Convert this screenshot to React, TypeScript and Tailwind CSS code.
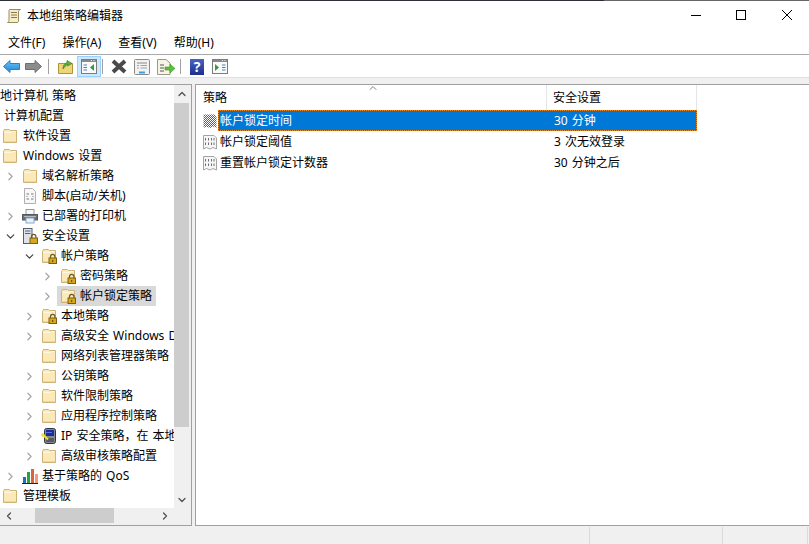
import { ChevronDown, ChevronLeft, ChevronRight, ChevronUp } from "lucide-react"

type IconName = "folder" | "lock" | "script" | "printer" | "server" | "ip" | "qos"

interface TreeRow {
  label: string
  level: number
  arrow?: "closed" | "open"
  icon: IconName
  selected?: boolean
}

const treeRows: TreeRow[] = [
  { label: "软件设置", level: 0, icon: "folder" },
  { label: "Windows 设置", level: 0, icon: "folder" },
  { label: "域名解析策略", level: 1, arrow: "closed", icon: "folder" },
  { label: "脚本(启动/关机)", level: 1, icon: "script" },
  { label: "已部署的打印机", level: 1, arrow: "closed", icon: "printer" },
  { label: "安全设置", level: 1, arrow: "open", icon: "server" },
  { label: "帐户策略", level: 2, arrow: "open", icon: "lock" },
  { label: "密码策略", level: 3, arrow: "closed", icon: "lock" },
  { label: "帐户锁定策略", level: 3, arrow: "closed", icon: "lock", selected: true },
  { label: "本地策略", level: 2, arrow: "closed", icon: "lock" },
  { label: "高级安全 Windows Defender 防火墙", level: 2, arrow: "closed", icon: "folder" },
  { label: "网络列表管理器策略", level: 2, icon: "folder" },
  { label: "公钥策略", level: 2, arrow: "closed", icon: "folder" },
  { label: "软件限制策略", level: 2, arrow: "closed", icon: "folder" },
  { label: "应用程序控制策略", level: 2, arrow: "closed", icon: "folder" },
  { label: "IP 安全策略，在 本地计算机", level: 2, arrow: "closed", icon: "ip" },
  { label: "高级审核策略配置", level: 2, arrow: "closed", icon: "folder" },
  { label: "基于策略的 QoS", level: 1, arrow: "closed", icon: "qos" },
  { label: "管理模板", level: 0, icon: "folder" },
]

const policies = [
  { name: "帐户锁定时间", value: "30 分钟", selected: true },
  { name: "帐户锁定阈值", value: "3 次无效登录" },
  { name: "重置帐户锁定计数器", value: "30 分钟之后" },
]

function Folder({ lock }: { lock?: boolean }) {
  return (
    <svg width="16" height="16" viewBox="0 0 16 16" className="shrink-0">
      <path d="M1.5 3.5V14.5H14.5V2.5H8.5L7.5 1.5H2.5Z" fill="#fbe9b8" stroke="#cdb27a" />
      <path d="M2.5 4.5H9.5L10.5 3.5H13.5" fill="none" stroke="#fff8e2" />
      <path d="M2 13.5H14" stroke="#f0d898" />
      {lock && (
        <g>
          <path d="M9.5 10V8.5a2.2 2.2 0 0 1 4.4 0V10" fill="none" stroke="#6a5a30" strokeWidth="1.2" />
          <rect x="8" y="10" width="7.5" height="5.5" fill="#d8a81c" stroke="#7d6010" />
          <path d="M11.7 12V14" stroke="#5a4408" />
        </g>
      )}
    </svg>
  )
}

function TreeIcon({ name }: { name: IconName }) {
  if (name === "folder") return <Folder />
  if (name === "lock") return <Folder lock />
  if (name === "script")
    return (
      <svg width="16" height="16" viewBox="0 0 16 16" className="shrink-0">
        <path d="M2.5 .5H10.5L13.5 3.5V15.5H2.5Z" fill="#f7f7f7" stroke="#b0b0b0" />
        <path d="M4.5 6H7M9 6H11.5M4.5 8.5H5.5M10.5 8.5H11.5M4.5 11H7M9 11H11.5" stroke="#7a7a7a" />
      </svg>
    )
  if (name === "printer")
    return (
      <svg width="16" height="16" viewBox="0 0 16 16" className="shrink-0">
        <rect x="4" y="1.5" width="8" height="6" fill="#f6f6f6" stroke="#9a9a9a" />
        <rect x=".5" y="6.5" width="15" height="5.5" fill="#6c7074" stroke="#55585c" />
        <rect x="2" y="8" width="12" height="1" fill="#b8bcc0" />
        <rect x="4" y="10" width="8" height="5" fill="#eaf2fa" stroke="#86a8c8" />
      </svg>
    )
  if (name === "server")
    return (
      <svg width="16" height="16" viewBox="0 0 16 16" className="shrink-0">
        <rect x="1.5" y=".5" width="8.5" height="15" fill="#dfe3e8" stroke="#56606c" />
        <path d="M3 3H8.5M3 5.5H8.5" stroke="#456a95" />
        <path d="M9.5 10V8.5a2.2 2.2 0 0 1 4.4 0V10" fill="none" stroke="#6a5a30" strokeWidth="1.2" />
        <rect x="8" y="10" width="7.5" height="5.5" fill="#d8a81c" stroke="#7d6010" />
      </svg>
    )
  if (name === "ip")
    return (
      <svg width="16" height="16" viewBox="0 0 16 16" className="shrink-0">
        <rect x="3.5" y=".5" width="11" height="15" rx="2" fill="#858a92" stroke="#30343a" />
        <rect x="5" y="2" width="8" height="6" fill="#1c2ca0" />
        <path d="M5 4.5H11" stroke="#5a74d8" />
        <path d="M5 11H13M5 13H13" stroke="#2a2a2a" />
        <path d="M1 6L7 11.5" stroke="#f0e020" strokeWidth="2" />
        <circle cx="2" cy="7" r="1.7" fill="#f0e020" />
      </svg>
    )
  return (
    <svg width="16" height="16" viewBox="0 0 16 16" className="shrink-0">
      <rect x="1" y="9" width="3" height="6" fill="#1b70c4" />
      <rect x="5" y="4" width="3" height="11" fill="#2f9e3e" />
      <rect x="9" y="1" width="3" height="14" fill="#dc623e" />
      <rect x="13" y="6" width="3" height="9" fill="#f29a7a" />
      <path d="M0 15.5H16" stroke="#222" />
    </svg>
  )
}

function PolicyIcon({ selected }: { selected?: boolean }) {
  const shape = "M1.5 1.5H12L14.5 4V15L11 13.5L8 15L4.5 13.5L1.5 15Z"
  if (selected) {
    return (
      <svg width="16" height="16" viewBox="0 0 16 16" className="shrink-0">
        <defs>
          <pattern id="dither" width="2" height="2" patternUnits="userSpaceOnUse">
            <rect width="2" height="2" fill="#ffffff" />
            <rect width="1" height="1" fill="#0078d7" />
            <rect x="1" y="1" width="1" height="1" fill="#0078d7" />
          </pattern>
        </defs>
        <path d={shape} fill="url(#dither)" />
      </svg>
    )
  }
  return (
    <svg width="16" height="16" viewBox="0 0 16 16" className="shrink-0">
      <path d={shape} fill="#f6f6f6" stroke="#a4a4a4" />
      <path d="M3.5 4V6.5M6.5 4V6.5M9.5 4V6.5M12 4V6.5M3.5 8.5V11M6.5 8.5V11M9.5 8.5V11M12 8.5V11" stroke="#6e6e6e" />
    </svg>
  )
}

function PanelIcon({ side }: { side: "left" | "right" }) {
  return (
    <svg width="16" height="15" viewBox="0 0 16 15">
      <rect x=".5" y=".5" width="15" height="14" fill="#fafafa" stroke="#7c7c7c" />
      <rect x="1" y="1" width="14" height="2" fill="#8a8a8a" />
      <path d="M10 1.5H11M12.5 1.5H13.5" stroke="#eee" />
      {side === "left" ? (
        <>
          <path d="M2.5 6H6M2.5 8.5H6M2.5 11H6" stroke="#4a80b0" />
          <path d="M13 5V12L9 8.5Z" fill="#2f9e3e" />
        </>
      ) : (
        <>
          <path d="M3 5V12L7 8.5Z" fill="#2f9e3e" />
          <path d="M10 6H13.5M10 8.5H13.5M10 11H13.5" stroke="#4a80b0" />
        </>
      )}
    </svg>
  )
}

function Toolbar() {
  return (
    <div className="flex h-[23px] items-center border-t border-[#a9a9a9] bg-white pl-[3px]">
      <svg width="17" height="13" viewBox="0 0 17 13" className="mt-[1px]">
        <defs>
          <linearGradient id="back" x1="0" y1="0" x2="0" y2="1">
            <stop offset="0" stopColor="#6cc4f4" />
            <stop offset="1" stopColor="#1c84d8" />
          </linearGradient>
        </defs>
        <path d="M.5 6.5L7 .5V3.5H16.5V9.5H7V12.5Z" fill="url(#back)" stroke="#2a80c8" />
      </svg>
      <svg width="17" height="13" viewBox="0 0 17 13" className="ml-[5px] mt-[1px]">
        <path d="M16.5 6.5L10 .5V3.5H.5V9.5H10V12.5Z" fill="#8c8c8c" stroke="#6e6e6e" />
      </svg>
      <div className="ml-[6px] mt-[1px] h-[15px] w-px bg-[#a0a0a0]" />
      <svg width="15" height="16" viewBox="0 0 15 16" className="ml-[9px]">
        <path d="M.5 5.5H14.5V15.5H.5Z" fill="#f0d478" stroke="#b09438" />
        <path d="M5 11C5 7 7 5 9 4.5V2.5L14 5.5L9.5 8V6.5C8 7 6.5 9 5 11Z" fill="#5cb03a" stroke="#2e7a1a" strokeWidth=".6" />
      </svg>
      <div className="ml-[4px] flex h-[21px] w-[24px] items-center justify-center border border-[#99d1ff] bg-[#cce8ff]">
        <PanelIcon side="left" />
      </div>
      <div className="ml-[1px] mt-[1px] h-[15px] w-px bg-[#a0a0a0]" />
      <svg width="16" height="15" viewBox="0 0 16 15" className="ml-[8px] mt-[1px]">
        <path d="M2 2L14 13M14 2L2 13" stroke="#4a4a4a" strokeWidth="4" />
      </svg>
      <svg width="16" height="16" viewBox="0 0 16 16" className="ml-[7px] mt-[1px]">
        <rect x=".5" y=".5" width="15" height="15" rx="1" fill="#f2f2f2" stroke="#8a8a8a" />
        <path d="M3 4H13" stroke="#8a8a8a" />
        <path d="M3 6.5H5M6.5 6.5H13M3 9H5M6.5 9H13" stroke="#9aa4ae" />
        <path d="M5 13.5H11" stroke="#3aa0e8" strokeWidth="2" />
      </svg>
      <svg width="18" height="16" viewBox="0 0 18 16" className="ml-[7px] mt-[1px]">
        <path d="M.5 .5H9L13 4V15.5H.5Z" fill="#f8f4e4" stroke="#9a9a8a" />
        <path d="M3 6H7M3 9H7M3 12H7" stroke="#555" />
        <path d="M8 8H13V5L18 9.5L13 14V11H8Z" fill="#5cc03c" stroke="#2e8a1a" strokeWidth=".5" />
      </svg>
      <div className="ml-[5px] mt-[1px] h-[15px] w-px bg-[#a0a0a0]" />
      <div className="ml-[9px] mt-[1px] flex h-[16px] w-[14px] items-center justify-center bg-gradient-to-b from-[#4a62c8] to-[#1c2f8c] text-[14px] leading-none font-bold text-white">
        ?
      </div>
      <div className="ml-[8px] mt-[1px] flex">
        <PanelIcon side="right" />
      </div>
    </div>
  )
}

function Arrow({ open }: { open: boolean }) {
  return open ? (
    <ChevronDown size={13} strokeWidth={2.2} color="#404040" />
  ) : (
    <ChevronRight size={13} strokeWidth={2.2} color="#a6a6a6" />
  )
}

function Tree() {
  return (
    <div className="flex h-[442px] w-[192px] shrink-0 flex-col border-y border-r border-[#a0a0a0] bg-white">
      <div className="flex min-h-0 flex-1">
        <div className="w-[174px] shrink-0 overflow-hidden pt-[1px]">
          <div className="-ml-[12px] flex h-5 items-center whitespace-nowrap [word-spacing:1px]">本地计算机 策略</div>
          <div className="ml-[4px] flex h-5 items-center whitespace-nowrap">计算机配置</div>
          {treeRows.map((row) => (
            <div key={row.label} className="flex h-5 items-center whitespace-nowrap [word-spacing:1px]">
              {row.level === 0 ? (
                <span className="w-[2px] shrink-0" />
              ) : row.level === 1 ? (
                <span className="flex w-[22px] shrink-0 justify-end pr-[5px]">
                  {row.arrow && <Arrow open={row.arrow === "open"} />}
                </span>
              ) : row.level === 2 ? (
                <span className="flex w-[41px] shrink-0 justify-end pr-[5px]">
                  {row.arrow && <Arrow open={row.arrow === "open"} />}
                </span>
              ) : (
                <span className="flex w-[57px] shrink-0 justify-end pr-[3px]">
                  {row.arrow && <Arrow open={row.arrow === "open"} />}
                </span>
              )}
              <span className={`flex h-5 items-center ${row.level === 3 ? "pl-[3px]" : ""} ${row.selected ? "bg-[#d9d9d9]" : ""}`}>
                <TreeIcon name={row.icon} />
                <span className={`${row.level === 0 ? "ml-[5px]" : "ml-[4px]"} pr-[4px]`}>{row.label}</span>
              </span>
            </div>
          ))}
        </div>
        <div className="flex w-[17px] flex-col bg-[#f0f0f0] pr-[2px]">
          <div className="flex h-[17px] items-center justify-center">
            <ChevronUp size={12} strokeWidth={2.5} color="#505050" />
          </div>
          <div className="mt-[1px] h-[324px] bg-[#cdcdcd]" />
          <div className="flex-1" />
          <div className="flex h-[17px] items-center justify-center">
            <ChevronDown size={12} strokeWidth={2.5} color="#505050" />
          </div>
        </div>
      </div>
      <div className="flex h-[17px] items-start bg-[#f0f0f0]">
        <div className="flex h-[15px] w-[17px] items-center justify-center">
          <ChevronLeft size={12} strokeWidth={2.5} color="#505050" />
        </div>
        <div className="ml-[18px] h-[15px] w-[79px] bg-[#cdcdcd]" />
        <div className="flex-1" />
        <div className="mr-[18px] flex h-[15px] w-[17px] items-center justify-center">
          <ChevronRight size={12} strokeWidth={2.5} color="#505050" />
        </div>
      </div>
    </div>
  )
}

function PolicyList() {
  return (
    <div className="ml-[3px] h-[442px] flex-1 border-y border-l border-[#a0a0a0] bg-white">
      <div className="relative flex h-[25px]">
        <div className="flex w-[351px] items-center border-r border-[#e5e5e5] pl-[7px]">策略</div>
        <div className="flex w-[150px] items-center border-r border-[#e5e5e5] pl-[6px]">安全设置</div>
        <ChevronUp size={12} color="#808080" className="absolute top-[-3px] left-[171px]" />
      </div>
      {policies.map((p) => (
        <div key={p.name} className="flex h-[21px] items-center pl-[6px]">
          <PolicyIcon selected={p.selected} />
          <div
            className={`flex h-[21px] w-[479px] items-center ${
              p.selected ? "border border-dotted border-[#f08a24] bg-[#0078d7] text-white" : "border border-transparent"
            }`}
          >
            <span className="w-[329px] pl-[1px]">{p.name}</span>
            <span className="pl-[6px] [word-spacing:1px]">{p.value}</span>
          </div>
        </div>
      ))}
    </div>
  )
}

export default function App() {
  return (
    <div className="flex h-[544px] w-[809px] flex-col overflow-hidden bg-white font-['Noto_Sans','Noto_Sans_CJK_SC',sans-serif] text-[12px] text-black">
      <div className="flex h-px">
        <div className="w-[604px] bg-[#2c2f36]" />
        <div className="flex-1 bg-[#666]" />
      </div>
      <div className="flex h-[29px] items-center bg-white">
        <svg width="16" height="16" viewBox="0 0 16 16" className="ml-[6px]">
          <path d="M3.5 1.5H14.5C13 2 12.5 3 12.5 4V13C12.5 14 12 14.5 11 14.5H1.5C2.5 14 3 13.5 3 12.5V3C3 2.5 3 2 3.5 1.5Z" fill="#f6eecb" stroke="#9a8a5a" />
          <path d="M5 4.5H11M5 7H11M5 9.5H11" stroke="#8a7a4a" />
        </svg>
        <span className="ml-[5px]">本地组策略编辑器</span>
        <div className="ml-auto flex items-center">
          <svg width="46" height="29" viewBox="0 0 46 29">
            <path d="M20 14.5H30" stroke="#000" />
          </svg>
          <svg width="46" height="29" viewBox="0 0 46 29">
            <rect x="19.5" y="9.5" width="9" height="9" fill="none" stroke="#000" />
          </svg>
          <svg width="46" height="29" viewBox="0 0 46 29">
            <path d="M19 9L29 19M29 9L19 19" stroke="#000" />
          </svg>
        </div>
      </div>
      <div className="flex h-[24px] items-center gap-[17px] bg-white pt-[2px] pl-[8px]">
        <span>文件(F)</span>
        <span>操作(A)</span>
        <span>查看(V)</span>
        <span>帮助(H)</span>
      </div>
      <Toolbar />
      <div className="h-[7px] border-t border-[#e0e0e0] bg-[#f0f0f0]" />
      <div className="flex bg-[#f0f0f0]">
        <Tree />
        <PolicyList />
      </div>
      <div className="flex flex-1 justify-end bg-[#f0f0f0] pt-[1px]">
        <div className="w-[133px] border-l border-[#d9d9d9]" />
        <div className="w-[85px] border-l border-[#d9d9d9]" />
        <div className="w-[2px] border-l border-[#d9d9d9]" />
      </div>
    </div>
  )
}
